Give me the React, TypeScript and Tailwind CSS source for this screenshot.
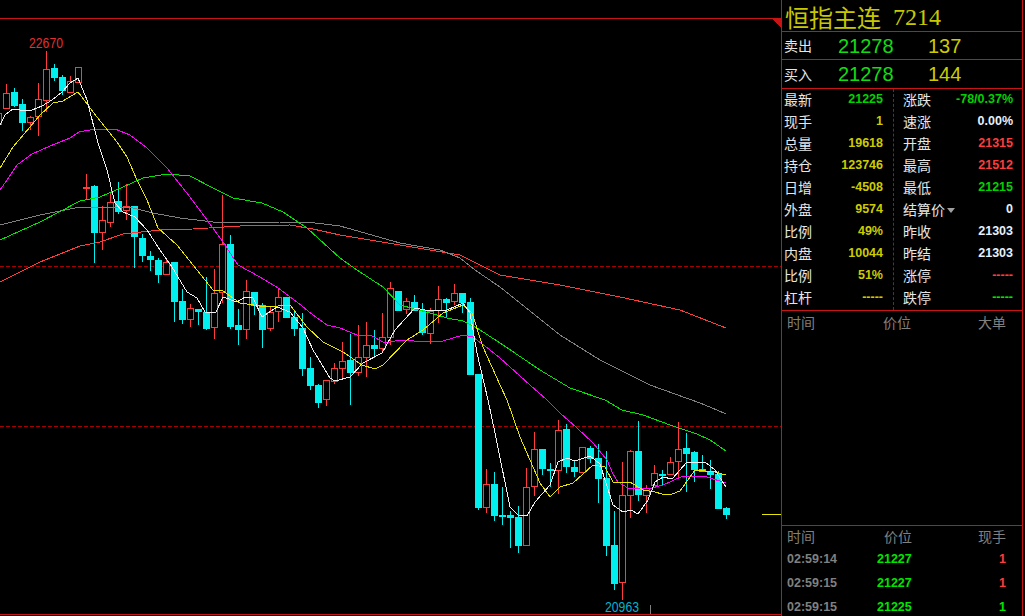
const C: [number, number, number, number, number][] = [
  [1,113,113,125,125],[1,84,93,109,109],[0,88,92,106,107],[0,99,104,123,131],[1,116,117,123,130],[1,83,99,117,136],[1,51,69,101,112],[0,64,68,78,81],[0,75,77,91,95],[1,76,81,93,93],[1,67,67,83,83],
  [1,174,187,188,199],[0,185,186,233,263],[1,206,220,233,250],[1,192,202,223,227],[0,182,201,212,214],[1,184,206,211,220],[0,206,206,237,268],[0,234,238,256,262],[0,251,256,260,271],[0,258,260,275,283],[1,259,262,275,275],
  [0,262,262,302,322],[0,289,301,320,324],[1,304,308,320,327],[0,309,309,312,325],[0,277,312,329,330],[1,269,293,328,339],[1,195,244,293,303],[0,235,244,327,329],[0,309,325,330,345],[1,280,291,330,339],[0,292,292,306,315],
  [0,303,305,330,348],[1,307,312,329,331],[1,288,297,312,322],[0,297,297,318,318],[0,312,317,329,336],[0,313,328,369,376],[0,357,368,386,390],[0,384,385,403,408],[1,380,380,400,406],[1,363,368,382,384],[1,342,361,369,378],
  [0,334,360,373,405],[1,325,357,373,376],[1,322,345,358,377],[0,330,345,349,358],[1,313,337,349,353],[1,282,288,338,345],[0,291,291,311,311],[1,298,301,310,314],[0,295,302,311,311],[0,303,310,333,335],[1,308,311,334,344],
  [1,286,299,311,323],[0,298,299,303,317],[1,284,293,302,305],[0,293,293,303,313],[0,298,302,375,375],[0,374,374,508,510],[1,469,484,508,513],[0,472,484,516,521],[0,487,515,517,525],[0,511,515,518,548],[0,506,517,546,553],
  [1,468,487,546,546],[1,432,449,487,496],[0,449,449,469,475],[0,463,469,471,487],[1,420,430,471,494],[0,424,429,467,473],[0,460,467,472,477],[1,447,447,473,473],[0,446,448,459,463],[0,444,458,479,503],[0,451,478,546,556],
  [0,511,545,584,590],[1,462,495,583,600],[1,450,451,496,518],[0,421,451,495,501],[1,485,488,496,513],[1,465,473,486,486],[0,470,474,476,486],[1,457,462,475,475],[1,422,449,462,477],[0,433,448,454,492],[0,451,452,470,482],
  [0,455,469,472,472],[0,460,471,475,489],[0,471,474,509,509],[0,507,508,515,519],
];
const white = "0,125 5,115 13,109 20,110 32,110 42,106 52,100 62,92 70,83 78,78 87,100 98,143 107,170 115,203 123,212 135,217 147,230 160,250 172,267 187,292 197,298 205,312 216,312 223,297 237,302 245,297 253,298 262,317 277,307 290,312 303,328 313,350 330,378 335,381 350,377 363,363 382,353 395,330 415,308 425,310 447,310 463,303 470,313 477,353 488,400 495,433 510,507 518,515 527,516 535,502 550,485 558,462 567,458 575,461 590,456 600,464 613,505 623,512 631,510 638,514 648,500 655,482 663,477 672,479 687,462 705,462 715,470 726,487";
const yellow = "0,168 13,147 30,127 40,115 53,103 63,101 78,92 97,117 117,142 127,157 137,180 147,200 158,228 177,245 197,270 213,290 223,291 240,303 267,307 290,305 307,327 323,342 343,352 362,365 375,369 383,365 407,340 423,330 443,313 463,305 472,313 483,347 500,385 507,400 520,437 540,483 550,497 560,487 573,483 593,465 605,467 613,482 630,482 643,490 655,492 662,494 672,494 680,491 695,470 715,472 726,475";
const magenta = "0,190 7,180 17,165 32,154 50,146 70,138 79,132 95,129 115,129 130,135 147,148 167,168 190,197 207,220 223,242 238,265 260,277 278,288 297,302 313,315 327,325 340,328 357,335 372,336 385,343 400,340 427,342 443,341 463,335 473,337 490,350 500,358 530,385 547,400 560,413 577,428 593,443 607,460 613,474 618,482 628,488 648,489 663,485 683,476 707,477 726,483";
const green = "0,240 40,222 80,201 100,197 123,187 143,178 167,174 190,176 213,188 233,198 262,203 283,212 307,228 340,258 357,270 383,287 400,305 430,313 447,318 463,321 477,328 500,343 540,370 570,388 605,400 622,410 643,415 670,425 697,434 710,440 726,451";
const gray = "0,225 40,215 80,207 107,207 133,208 153,213 180,218 213,222 240,223 280,222 307,222 340,226 400,243 440,250 460,258 475,270 500,287 560,335 600,360 650,385 700,403 717,410 726,414";
const red = "0,282 40,262 80,246 100,242 123,234 160,230 193,229 240,226 290,225 313,229 340,235 400,245 460,255 500,275 560,285 620,297 680,310 726,328";

function Chart() {
  return (
    <svg width={781} height={616} className="block shrink-0" shapeRendering="crispEdges">
      <rect x={0} y={18} width={781} height={1} fill="#c81414" />
      <rect x={0} y={614} width={781} height={1} fill="#c81414" />
      <polygon points="771,18 781,18 781,28" fill="#c81414" />
      <line x1={0} x2={781} y1={266.5} y2={266.5} stroke="#a80000" strokeDasharray="4 2" />
      <line x1={0} x2={781} y1={426.5} y2={426.5} stroke="#a80000" strokeDasharray="4 2" />
      <rect x={762} y={514} width={19} height={1} fill="#e6e600" />
      <rect x={650} y={605} width={1} height={9} fill="#808080" />
      {C.map(([up, hi, top, bot, lo], i) => {
        const x = -2 + i * 8;
        const col = up ? "#ff3c3c" : "#00f0f0";
        return (
          <g key={i}>
            <rect x={x} y={hi} width={1} height={Math.max(lo - hi, 1)} fill={col} />
            {up ? (
              <>
                <rect x={x - 3} y={top} width={7} height={Math.max(bot - top, 2)} fill="#000" />
                <rect x={x - 2.5} y={top + 0.5} width={6} height={Math.max(bot - top - 1, 1)} fill="none" stroke={col} />
              </>
            ) : (
              <rect x={x - 3} y={top} width={7} height={Math.max(bot - top, 2)} fill={col} />
            )}
          </g>
        );
      })}
      <polyline points={red} fill="none" stroke="#ff3c3c" />
      <polyline points={gray} fill="none" stroke="#808080" />
      <polyline points={green} fill="none" stroke="#00e600" />
      <polyline points={magenta} fill="none" stroke="#ff00ff" />
      <polyline points={yellow} fill="none" stroke="#e6e600" />
      <polyline points={white} fill="none" stroke="#f0f0f0" />
      <text x={29} y={48} fill="#e03030" fontSize={14} textLength={34} lengthAdjust="spacingAndGlyphs" fontFamily="'Liberation Sans', sans-serif">22670</text>
      <text x={605} y={612} fill="#00b4d2" fontSize={14} textLength={34} lengthAdjust="spacingAndGlyphs" fontFamily="'Liberation Sans', sans-serif">20963</text>
    </svg>
  );
}

const cjk = "font-['Noto_Sans_CJK_SC',sans-serif]";
const num = "font-['Liberation_Sans',sans-serif] font-bold text-[12.5px]";
const Y = "text-[#cccc00]";
const G = "text-[#00d200]";
const R = "text-[#ff3c3c]";
const W = "text-[#e6f0ff]";

const stats: [string, string, string, string, string, string][] = [
  ["最新", "21225", G, "涨跌", "-78/0.37%", G],
  ["现手", "1", Y, "速涨", "0.00%", W],
  ["总量", "19618", Y, "开盘", "21315", R],
  ["持仓", "123746", Y, "最高", "21512", R],
  ["日增", "-4508", Y, "最低", "21215", G],
  ["外盘", "9574", Y, "结算价", "0", W],
  ["比例", "49%", Y, "昨收", "21303", W],
  ["内盘", "10044", Y, "昨结", "21303", W],
  ["比例", "51%", Y, "涨停", "-----", "text-[#ff3c3c]"],
  ["杠杆", "-----", Y, "跌停", "-----", "text-[#00e600]"],
];

const trades: [string, string, string, string][] = [
  ["02:59:14", "21227", "1", R],
  ["02:59:15", "21227", "1", R],
  ["02:59:15", "21225", "1", "text-[#00e600]"],
];

export default function App() {
  return (
    <div className="flex h-[616px] w-[1025px] overflow-hidden bg-black">
      <Chart />
      <div className="flex h-[616px] w-[242px] shrink-0 flex-col overflow-hidden border-x border-[#c81414]">
        <div className="flex h-[32px] shrink-0 items-center gap-[12px] border-b border-[#c81414] pl-[3px] pt-[2px] text-[#c8c800]">
          <span className={`${cjk} text-[24px] leading-none`}>恒指主连</span>
          <span className="font-['Liberation_Serif',serif] text-[24px] leading-none">7214</span>
        </div>
        <div className="flex h-[28px] shrink-0 items-center border-b border-[#c81414] pl-[2px]">
          <span className={`${cjk} w-[54px] text-[14px] text-[#e6e6e6]`}>卖出</span>
          <span className="w-[90px] font-['Liberation_Sans',sans-serif] text-[20px] text-[#14dc14]">21278</span>
          <span className={`font-['Liberation_Sans',sans-serif] text-[20px] ${Y}`}>137</span>
        </div>
        <div className="flex h-[29px] shrink-0 items-center border-b border-[#c81414] pl-[2px]">
          <span className={`${cjk} w-[54px] text-[14px] text-[#e6e6e6]`}>买入</span>
          <span className="w-[90px] font-['Liberation_Sans',sans-serif] text-[20px] text-[#14dc14]">21278</span>
          <span className={`font-['Liberation_Sans',sans-serif] text-[20px] ${Y}`}>144</span>
        </div>
        <div className="relative h-[222px] shrink-0 border-b border-[#c81414]">
          <div className="absolute bottom-0 left-[111px] top-0 border-l border-dashed border-[#a01414]" />
          {stats.map(([a, b, bc, c, d, dc], i) => (
            <div key={i} className="flex h-[22px] items-center pb-[2px] pl-[2px] text-[#e6e6e6]">
              <span className={`${cjk} w-[30px] text-[14px]`}>{a}</span>
              <span className={`${num} ${bc} w-[69px] text-right`}>{b}</span>
              <span className={`${cjk} ml-[20px] flex items-center text-[14px]`}>
                {c}
                {c === "结算价" && <span className="ml-[2px] mt-[2px] h-0 w-0 border-x-[4px] border-t-[5px] border-x-transparent border-t-[#a0a0a0]" />}
              </span>
              <span className={`${num} ${dc} ml-auto pr-[9px]`}>{d}</span>
            </div>
          ))}
        </div>
        <div className={`${cjk} flex h-[215px] shrink-0 justify-between border-b border-[#c81414] pl-[5px] pr-[16px] pt-[1px] text-[14px] leading-[20px] text-[#808080]`}>
          <span>时间</span>
          <span className="ml-[1px]">价位</span>
          <span>大单</span>
        </div>
        <div className="flex shrink-0 flex-col">
          <div className={`${cjk} flex h-[21px] items-center text-[14px] text-[#808080]`}>
            <span className="w-[98px] pl-[5px]">时间</span>
            <span className="w-[98px] pl-[4px]">价位</span>
            <span className="w-[28px] text-right">现手</span>
          </div>
          {trades.map(([t, p, v, c], i) => (
            <div key={i} className={`${num} flex h-[24px] shrink-0 items-center`}>
              <span className="w-[95px] pl-[5px] text-[#808080]">{t}</span>
              <span className="w-[101px] text-[#00e600]">{p}</span>
              <span className={`${c} w-[28px] text-right`}>{v}</span>
            </div>
          ))}
        </div>
      </div>
    </div>
  );
}
